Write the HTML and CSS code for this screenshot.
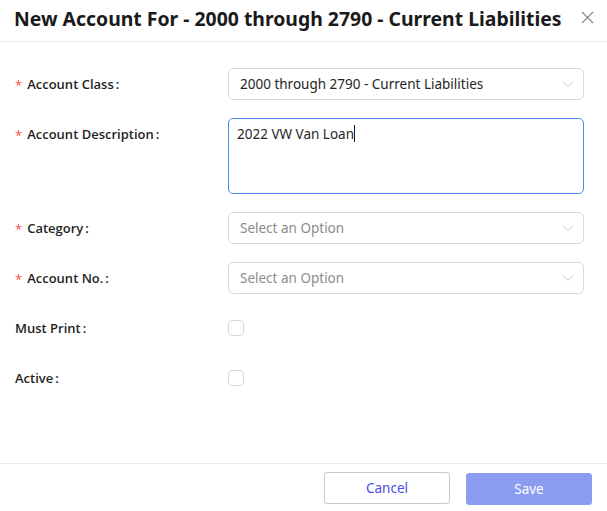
FILE: index.html
```html
<!DOCTYPE html>
<html>
<head>
<meta charset="utf-8">
<link rel="stylesheet" href="styles.css">
</head>
<body>
<div class="modal">
  <div class="header">
    <h1 class="title">New Account For - 2000 through 2790 - Current Liabilities</h1>
    <span class="close" aria-label="Close">
      <svg width="13" height="13" viewBox="0 0 13 13"><path d="M1 1L12 12M12 1L1 12" stroke="#8c8c8c" stroke-width="1.3" fill="none"/></svg>
    </span>
  </div>
  <div class="body">
    <div class="row">
      <label class="label"><span class="req">*</span>Account Class<span class="colon">:</span></label>
      <div class="select"><span class="value">2000 through 2790 - Current Liabilities</span><svg class="chev" width="12" height="8" viewBox="0 0 12 8"><path d="M1 1.5L6 6.5L11 1.5" stroke="#c4c4c4" stroke-width="1" fill="none"/></svg></div>
    </div>
    <div class="row">
      <label class="label"><span class="req">*</span>Account Description<span class="colon">:</span></label>
      <div class="textarea"><span class="value">2022 VW Van Loan</span><span class="caret"></span></div>
    </div>
    <div class="row">
      <label class="label"><span class="req">*</span>Category<span class="colon">:</span></label>
      <div class="select"><span class="placeholder">Select an Option</span><svg class="chev" width="12" height="8" viewBox="0 0 12 8"><path d="M1 1.5L6 6.5L11 1.5" stroke="#c4c4c4" stroke-width="1" fill="none"/></svg></div>
    </div>
    <div class="row">
      <label class="label"><span class="req">*</span>Account No.<span class="colon">:</span></label>
      <div class="select"><span class="placeholder">Select an Option</span><svg class="chev" width="12" height="8" viewBox="0 0 12 8"><path d="M1 1.5L6 6.5L11 1.5" stroke="#c4c4c4" stroke-width="1" fill="none"/></svg></div>
    </div>
    <div class="row">
      <label class="label">Must Print<span class="colon">:</span></label>
      <div class="check-wrap"><span class="checkbox"></span></div>
    </div>
    <div class="row">
      <label class="label">Active<span class="colon">:</span></label>
      <div class="check-wrap"><span class="checkbox"></span></div>
    </div>
  </div>
  <div class="footer">
    <button class="btn btn-cancel">Cancel</button>
    <button class="btn btn-save">Save</button>
  </div>
</div>
</body>
</html>
```
FILE: styles.css
```css
* { box-sizing: border-box; }
html, body { margin: 0; padding: 0; background: #fff; }
body {
  font-family: "Noto Sans", "Open Sans", sans-serif;
  color: #1f1f1f;
  width: 607px;
  height: 511px;
  overflow: hidden;
}
.modal {
  display: flex;
  flex-direction: column;
  height: 511px;
}
.header {
  height: 42px;
  border-bottom: 1px solid #ebebeb;
  display: flex;
  align-items: center;
  justify-content: space-between;
  padding: 0 13px 0 14px;
}
.title {
  margin: 0;
  font-size: 19.4px;
  font-weight: 700;
  color: #1a1a1a;
  letter-spacing: 0;
  line-height: 24px;
  padding-bottom: 3px;
  white-space: nowrap;
}
.close {
  display: flex;
  width: 13px;
  height: 13px;
  margin-bottom: 6px;
}
.body {
  flex: 1;
  padding: 26px 23px 0 15px;
  display: flex;
  flex-direction: column;
  gap: 18px;
}
.row {
  display: flex;
  align-items: flex-start;
}
.label {
  width: 213px;
  flex: none;
  height: 32px;
  display: flex;
  align-items: center;
  font-family: "Open Sans", "Noto Sans", sans-serif;
  font-size: 13px;
  font-weight: 600;
  color: #1f1f1f;
}
.req {
  color: #ff4d4f;
  font-weight: 400;
  font-size: 13px;
  margin-right: 5px;
  position: relative;
  top: 1px;
}
.colon { margin-left: 2px; }
.select {
  flex: 1;
  height: 32px;
  border: 1px solid #d9d9d9;
  border-radius: 5px;
  display: flex;
  align-items: center;
  justify-content: space-between;
  padding: 0 9px 0 11px;
  font-size: 13.5px;
}
.value { color: #262626; }
.placeholder { color: #8c8c8c; }
.chev { flex: none; }
.textarea {
  flex: 1;
  height: 76px;
  border: 1px solid #4a8cf7;
  border-radius: 5px;
  padding: 4px 8px;
  font-size: 13.5px;
  line-height: 22px;
  display: flex;
  align-items: flex-start;
}
.caret {
  display: inline-block;
  width: 1px;
  height: 17px;
  background: #222;
  margin-top: 2px;
}
.check-wrap {
  height: 32px;
  display: flex;
  align-items: center;
}
.checkbox {
  display: block;
  width: 16px;
  height: 16px;
  border: 1px solid #d9d9d9;
  border-radius: 4px;
  background: #fff;
}
.footer {
  height: 48px;
  border-top: 1px solid #ebebeb;
  display: flex;
  justify-content: flex-end;
  align-items: flex-start;
  gap: 16px;
  padding: 8px 15px 0 0;
}
.btn {
  width: 126px;
  height: 32px;
  border-radius: 3px;
  font-family: "Noto Sans", "Open Sans", sans-serif;
  font-size: 13.5px;
  cursor: pointer;
}
.btn-cancel {
  background: #fff;
  border: 1px solid #c8c8c8;
  color: #4c4ce6;
}
.btn-save {
  background: #8c9cf1;
  border: 1px solid #8c9cf1;
  color: #fff;
  margin-top: 1px;
}
```
